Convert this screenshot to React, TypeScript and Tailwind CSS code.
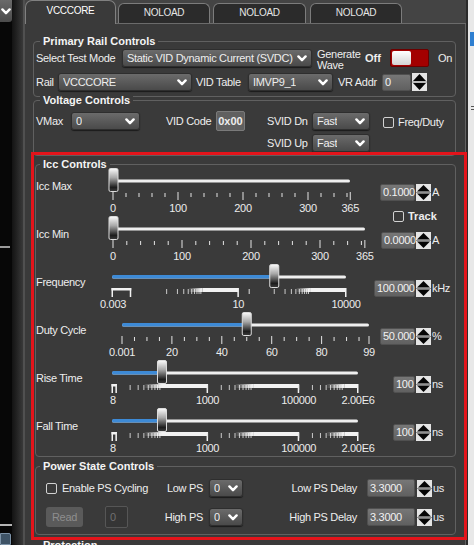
import type { ReactNode } from 'react'

const SANS = 'Liberation Sans, Arial, sans-serif'

// ── small widgets ─────────────────────────────────────────────────────────────
function Chevron() {
  return (
    <svg width="10" height="7" viewBox="0 0 10 7" className="shrink-0">
      <path d="M1.4 1.4 L5 5.2 L8.6 1.4" fill="none" stroke="#ffffff" strokeWidth="2.4" strokeLinecap="round" strokeLinejoin="round" />
    </svg>
  )
}

function Dropdown({ value, className = '' }: { value: string; className?: string }) {
  return (
    <div
      className={`flex h-[18px] shrink-0 items-center justify-between rounded-[3px] border border-[#2e2e2e] bg-linear-to-b from-[#6b6b6b] to-[#4a4a4a] pl-[4px] pr-[4px] shadow-[0_1px_1px_rgba(0,0,0,0.55)] ${className}`}
    >
      <span className="truncate leading-none">{value}</span>
      <Chevron />
    </div>
  )
}

function NumBox({ value, className = '' }: { value: string; className?: string }) {
  return (
    <div
      className={`flex h-[17px] shrink-0 items-center rounded-[2px] border border-[#505050] bg-linear-to-b from-[#777777] to-[#606060] pl-[2px] leading-none text-[#f2f2f2] ${className}`}
    >
      {value}
    </div>
  )
}

function Spin({ h = 17, className = '' }: { h?: number; className?: string }) {
  const m = h / 2
  return (
    <svg width="15" height={h} viewBox={`0 0 15 ${h}`} className={`shrink-0 ${className}`}>
      <rect x="0" y="0" width="15" height={h} fill="#e4e4e4" />
      <path d={`M7.5 1 L14 ${m - 1} L1 ${m - 1} Z`} fill="#050505" />
      <path d={`M7.5 ${h - 1} L14 ${m + 1} L1 ${m + 1} Z`} fill="#050505" />
      <rect x="0" y={m - 0.5} width="15" height="1" fill="#8f8f8f" />
    </svg>
  )
}

function Checkbox({ className = '' }: { className?: string }) {
  return <div className={`h-[11px] w-[11px] shrink-0 rounded-[2px] border border-[#d2d2d2] ${className}`} />
}

function Toggle({ className = '' }: { className?: string }) {
  return (
    <div className={`flex h-[18px] w-[39px] shrink-0 rounded-[2px] border border-[#6a0000] bg-[#a30000] p-[1px] ${className}`}>
      <div className="h-full w-[19px] rounded-[2px] bg-linear-to-b from-[#ffffff] to-[#d4d4d4]" />
    </div>
  )
}

function Group({
  title,
  tx = 'ml-[6px]',
  className = '',
  children,
}: {
  title: string
  tx?: string
  className?: string
  children?: ReactNode
}) {
  return (
    <div className={`shrink-0 rounded-[4px] border border-[#606060] ${className}`}>
      <div className={`-mt-[7px] w-fit bg-[#3a3a3a] px-[3px] font-bold leading-[13px] tracking-normal text-[#f4f4f4] ${tx}`}>
        {title}
      </div>
      {children}
    </div>
  )
}

// ── slider drawing ────────────────────────────────────────────────────────────
const TICK = '#e4e4e4'

function Tk({ x, major }: { x: number; major?: boolean }) {
  return <rect x={x - 0.5} y={major ? 24 : 25} width={1} height={major ? 8 : 4} fill={TICK} />
}

function Lbl({ x, children }: { x: number; children: ReactNode }) {
  return (
    <text x={x} y={44} textAnchor="middle" fontFamily={SANS} fontSize={11} letterSpacing={-0.3} fill="#ececec">
      {children}
    </text>
  )
}

function Bar({ a, b }: { a: number; b: number }) {
  return (
    <g fill="#f2f2f2">
      <rect x={a} y={24} width={b - a} height={4} />
      <rect x={b - 1} y={24} width={1.5} height={9} />
    </g>
  )
}

function Bracket({ a, b }: { a: number; b: number }) {
  return (
    <g fill="#f2f2f2">
      <rect x={a - 0.5} y={24} width={b - a + 1} height={2.5} />
      <rect x={a - 0.5} y={24} width={1.5} height={9} />
      <rect x={b - 1} y={24} width={1.5} height={9} />
    </g>
  )
}

function Decade({ p, d, gid }: { p: (v: number) => number; d: number; gid: string }) {
  return (
    <g>
      {[1, 2, 3, 4, 5, 6, 7, 8, 9].map(m => (
        <rect key={m} x={p(m * d) - 0.5} y={25} width={1} height={5} fill={TICK} opacity={0.85} />
      ))}
      <rect x={p(4 * d)} y={24} width={p(10 * d) - p(4 * d)} height={4} fill={`url(#${gid})`} />
    </g>
  )
}

function SliderArt({
  id,
  x0,
  x1,
  thumb,
  fill,
  children,
}: {
  id: string
  x0: number
  x1: number
  thumb: number
  fill?: boolean
  children?: ReactNode
}) {
  return (
    <>
      <defs>
        <linearGradient id={`t${id}`} x1="0" y1="0" x2="0" y2="1">
          <stop offset="0" stopColor="#fbfbfb" />
          <stop offset="0.4" stopColor="#a8a8a8" />
          <stop offset="0.82" stopColor="#1c1c1c" />
          <stop offset="1" stopColor="#3c3c3c" />
        </linearGradient>
        <linearGradient id={`g${id}`} x1="0" y1="0" x2="1" y2="0">
          <stop offset="0" stopColor="#ffffff" stopOpacity="0" />
          <stop offset="1" stopColor="#ffffff" stopOpacity="0.95" />
        </linearGradient>
      </defs>
      <rect x={x0} y={11.5} width={x1 - x0} height={3} rx={1.5} fill="#efefef" />
      {fill && <rect x={x0} y={11} width={thumb - x0} height={3.5} rx={1.5} fill="#3d8ad6" />}
      {children}
      <rect x={thumb - 4.5} y={0.5} width={9} height={23} rx={1.5} fill={`url(#t${id})`} stroke="#dcdcdc" />
    </>
  )
}

function SliderRow({
  label,
  value,
  inputW,
  unit,
  extra,
  children,
}: {
  label: string
  value: string
  inputW: string
  unit: string
  extra?: ReactNode
  children: ReactNode
}) {
  return (
    <div className="flex h-[48px] shrink-0">
      <div className="w-[64px] shrink-0 pt-[12px] leading-[13px]">{label}</div>
      <svg width={276} height={48} className="shrink-0 overflow-visible">
        {children}
      </svg>
      <div className="flex w-[78px] shrink-0 flex-col">
        <div className="mt-[16px] flex items-center">
          <div className="flex w-[39px] justify-end">
            <NumBox value={value} className={inputW} />
          </div>
          <Spin className="ml-[1px]" />
          <span className="ml-[1px] leading-none">{unit}</span>
        </div>
        {extra}
      </div>
    </div>
  )
}

// scales
const lin = (x0: number, k: number) => (v: number) => x0 + v * k
const logp = (lo: number, hi: number, x0: number, w: number) => (v: number) =>
  x0 + ((Math.log10(v) - Math.log10(lo)) / (Math.log10(hi) - Math.log10(lo))) * w

function LinearTicks({ p, step, major, max, end }: { p: (v: number) => number; step: number; major: number; max: number; end: number }) {
  const out: ReactNode[] = []
  for (let v = 0; v <= max; v += step) out.push(<Tk key={v} x={p(v)} major={v % major === 0} />)
  out.push(<Tk key="end" x={p(end)} major />)
  return <>{out}</>
}

const pMax = lin(13, 0.65)
const pMin = lin(13, 0.69)
const pDuty = lin(22, 2.495)
const pFreq = logp(0.003, 10000, 12, 234)
const pRise = logp(8, 2e6, 12, 246)

function RiseScale({ id }: { id: string }) {
  const g = `g${id}`
  return (
    <>
      <Bracket a={pRise(8)} b={pRise(10)} />
      <Decade p={pRise} d={10} gid={g} />
      <Bar a={pRise(100)} b={pRise(1000)} />
      <Decade p={pRise} d={1000} gid={g} />
      <Bar a={pRise(1e4)} b={pRise(1e5)} />
      <Decade p={pRise} d={1e5} gid={g} />
      <Bar a={pRise(1e6)} b={pRise(2e6)} />
      <Lbl x={pRise(8) + 1}>8</Lbl>
      <Lbl x={pRise(1000)}>1000</Lbl>
      <Lbl x={pRise(1e5)}>100000</Lbl>
      <Lbl x={pRise(2e6)}>2.00E6</Lbl>
    </>
  )
}

// ── frame pieces ──────────────────────────────────────────────────────────────
function LeftStrip() {
  return (
    <div className="flex h-full w-[25px] shrink-0">
      <div className="flex w-[12px] shrink-0 flex-col bg-[#070707]">
        <div className="flex h-[23px] items-center rounded-br-[3px] bg-linear-to-b from-[#6a6a6a] to-[#4b4b4b] pl-[1px]">
          <Chevron />
        </div>
        <div className="mt-[224px] h-[2px] w-[10px] bg-[#9a9a9a]" />
        <div className="mt-[276px] h-[2px] w-[12px] bg-[#b4b4b4]" />
        <div className="mt-[7px] h-[12px] w-[11px] rounded-tr-[2px] border border-[#7d93a8] bg-[#3e5366]" />
      </div>
      <div className="w-[11px] shrink-0 bg-linear-to-r from-[#131313] to-[#393939]" />
      <div className="w-[2px] shrink-0 bg-[#505050]" />
    </div>
  )
}

function RightStrip() {
  return (
    <div className="flex h-full w-[8px] shrink-0">
      <div className="w-[2px] bg-[#2b2b2b]" />
      <div className="flex w-[6px] flex-col bg-[#e8e8e8]">
        <div className="ml-[2px] mt-[32px] h-[14px] w-[4px] bg-[#2f7fd0]" />
        <div className="ml-[3px] mt-[60px] h-[1px] w-[3px] bg-[#555]" />
        <div className="ml-[3px] mt-[2px] h-[1px] w-[3px] bg-[#555]" />
      </div>
    </div>
  )
}

function Tab({ label, className = '' }: { label: string; className?: string }) {
  return (
    <div
      className={`flex h-[20px] shrink-0 items-center justify-center rounded-t-[6px] border-x border-t border-[#7c7c7c] bg-[#2b2b2b] pb-[2px] text-[10px] text-[#e6e6e6] ${className}`}
    >
      {label}
    </div>
  )
}

export default function App() {
  return (
    <div className="relative flex h-[545px] w-[474px] overflow-hidden bg-[#3a3a3a] font-['Liberation_Sans',Arial,sans-serif] text-[11px] tracking-[-0.3px] text-[#eeeeee]">
      <LeftStrip />

      <div className="flex w-[441px] shrink-0 flex-col">
        {/* tabs */}
        <div className="flex h-[24px] shrink-0 items-end border-b border-[#6b6b6b] bg-[#444444]">
          <div className="-mb-px flex h-[24px] w-[91px] shrink-0 justify-center rounded-t-[7px] border-x border-t border-[#808080] bg-[#3a3a3a] pt-[3px] text-[10px] leading-[13px] text-white">
            VCCCORE
          </div>
          <Tab label="NOLOAD" className="ml-[2px] w-[92px]" />
          <Tab label="NOLOAD" className="ml-[3px] w-[93px]" />
          <Tab label="NOLOAD" className="ml-[4px] w-[92px]" />
        </div>

        {/* tab content */}
        <div className="flex min-h-0 flex-1 flex-col overflow-hidden border-r border-[#626262] bg-[#3a3a3a]">
          {/* ── Primary Rail Controls ─────────────────────────────── */}
          <Group title="Primary Rail Controls" className="ml-[8px] mt-[17px] w-[423px] pb-[5px]">
            <div className="mt-[1px] flex h-[18px] items-center pl-[2px]">
              <span className="w-[86px] shrink-0">Select Test Mode</span>
              <Dropdown value="Static VID Dynamic Current (SVDC)" className="w-[190px]" />
              <div className="ml-[5px] mt-[3px] flex w-[48px] shrink-0 flex-col leading-[11px]">
                <span>Generate</span>
                <span>Wave</span>
              </div>
              <span className="font-bold tracking-normal">Off</span>
              <Toggle className="ml-[9px]" />
              <span className="ml-[9px]">On</span>
            </div>
            <div className="mt-[6px] flex h-[18px] items-center pl-[2px]">
              <span className="w-[22px] shrink-0">Rail</span>
              <Dropdown value="VCCCORE" className="w-[134px]" />
              <span className="ml-[4px] w-[52px] shrink-0">VID Table</span>
              <Dropdown value="IMVP9_1" className="w-[85px]" />
              <span className="ml-[5px] w-[44px] shrink-0">VR Addr</span>
              <NumBox value="0" className="h-[16px] w-[29px] self-end" />
              <Spin h={18} className="ml-[1px]" />
            </div>
          </Group>

          {/* ── Voltage Controls ──────────────────────────────────── */}
          <Group title="Voltage Controls" className="ml-[8px] mt-[3px] w-[423px] pb-[3px]">
            <div className="mt-[5px] flex h-[18px] items-center pl-[2px]">
              <span className="w-[35px] shrink-0">VMax</span>
              <Dropdown value="0" className="w-[69px]" />
              <span className="ml-[26px] w-[50px] shrink-0">VID Code</span>
              <div className="flex h-[20px] w-[29px] shrink-0 items-center justify-center rounded-[2px] border border-[#7a7a7a] bg-[#606060] font-bold tracking-normal">
                0x00
              </div>
              <span className="ml-[22px] w-[45px] shrink-0">SVID Dn</span>
              <Dropdown value="Fast" className="w-[58px]" />
              <Checkbox className="ml-[13px] mt-[3px]" />
              <span className="ml-[4px] mt-[3px]">Freq/Duty</span>
            </div>
            <div className="mt-[4px] flex h-[18px] items-center pl-[233px]">
              <span className="w-[45px] shrink-0">SVID Up</span>
              <Dropdown value="Fast" className="w-[58px]" />
            </div>
          </Group>

          {/* ── Icc Controls ──────────────────────────────────────── */}
          <Group title="Icc Controls" tx="ml-[4px]" className="ml-[10px] mt-[8px] w-[421px]">
            <div className="-mt-[3px] flex flex-col">
              <SliderRow
                label="Icc Max"
                value="0.1000"
                inputW="w-[35px]"
                unit="A"
                extra={
                  <div className="ml-[17px] mt-[10px] flex items-center">
                    <Checkbox />
                    <span className="ml-[4px] font-bold leading-none tracking-normal">Track</span>
                  </div>
                }
              >
                <SliderArt id="max" x0={12} x1={250} thumb={13.5}>
                  <LinearTicks p={pMax} step={20} major={100} max={360} end={365} />
                  <Lbl x={pMax(0)}>0</Lbl>
                  <Lbl x={pMax(100)}>100</Lbl>
                  <Lbl x={pMax(200)}>200</Lbl>
                  <Lbl x={pMax(300)}>300</Lbl>
                  <Lbl x={pMax(365)}>365</Lbl>
                </SliderArt>
              </SliderRow>

              <SliderRow label="Icc Min" value="0.0000" inputW="w-[34px]" unit="A">
                <SliderArt id="min" x0={12} x1={265} thumb={13.5}>
                  <LinearTicks p={pMin} step={20} major={100} max={360} end={365} />
                  <Lbl x={pMin(0)}>0</Lbl>
                  <Lbl x={pMin(100)}>100</Lbl>
                  <Lbl x={pMin(200)}>200</Lbl>
                  <Lbl x={pMin(300)}>300</Lbl>
                  <Lbl x={pMin(365)}>365</Lbl>
                </SliderArt>
              </SliderRow>

              <SliderRow label="Frequency" value="100.000" inputW="w-[41px]" unit="kHz">
                <SliderArt id="frq" x0={12} x1={246} thumb={pFreq(100)} fill>
                  <Bracket a={pFreq(0.003)} b={pFreq(0.01)} />
                  <Decade p={pFreq} d={0.1} gid="gfrq" />
                  <Bar a={pFreq(1)} b={pFreq(10)} />
                  <rect x={pFreq(20) - 0.5} y={25} width={1} height={5} fill={TICK} />
                  <Decade p={pFreq} d={100} gid="gfrq" />
                  <Bar a={pFreq(1000)} b={pFreq(10000)} />
                  <Lbl x={pFreq(0.003) + 1}>0.003</Lbl>
                  <Lbl x={pFreq(10)}>10</Lbl>
                  <Lbl x={pFreq(10000)}>10000</Lbl>
                </SliderArt>
              </SliderRow>

              <SliderRow label="Duty Cycle" value="50.000" inputW="w-[35px]" unit="%">
                <SliderArt id="dty" x0={22} x1={269} thumb={pDuty(50)} fill>
                  <LinearTicks p={pDuty} step={5} major={20} max={95} end={99} />
                  <Lbl x={pDuty(0)}>0.001</Lbl>
                  <Lbl x={pDuty(20)}>20</Lbl>
                  <Lbl x={pDuty(40)}>40</Lbl>
                  <Lbl x={pDuty(60)}>60</Lbl>
                  <Lbl x={pDuty(80)}>80</Lbl>
                  <Lbl x={pDuty(99)}>99</Lbl>
                </SliderArt>
              </SliderRow>

              <SliderRow label="Rise Time" value="100" inputW="w-[22px]" unit="ns">
                <SliderArt id="rse" x0={12} x1={258} thumb={pRise(100)} fill>
                  <RiseScale id="rse" />
                </SliderArt>
              </SliderRow>

              <SliderRow label="Fall Time" value="100" inputW="w-[22px]" unit="ns">
                <SliderArt id="fll" x0={12} x1={258} thumb={pRise(100)} fill>
                  <RiseScale id="fll" />
                </SliderArt>
              </SliderRow>
            </div>
          </Group>

          {/* ── Power State Controls ──────────────────────────────── */}
          <Group title="Power State Controls" tx="ml-[4px]" className="ml-[10px] mt-[9px] w-[421px] pb-[6px]">
            <div className="mt-[6px] flex h-[18px] items-center">
              <div className="flex w-[124px] shrink-0 items-center pl-[10px]">
                <Checkbox />
                <span className="ml-[5px]">Enable PS Cycling</span>
              </div>
              <span className="w-[43px] shrink-0 text-right">Low PS</span>
              <Dropdown value="0" className="ml-[6px] w-[34px]" />
              <span className="w-[114px] shrink-0 text-right">Low PS Delay</span>
              <NumBox value="3.3000" className="ml-[10px] h-[18px] w-[48px]" />
              <Spin className="ml-[2px]" />
              <span className="ml-[1px]">us</span>
            </div>
            <div className="mt-[9px] flex h-[22px] items-center">
              <div className="flex w-[124px] shrink-0 items-center pl-[10px]">
                <div className="flex h-[20px] w-[37px] items-center justify-center rounded-[3px] bg-[#5a5a5a] text-[#8e8e8e]">
                  Read
                </div>
                <div className="ml-[22px] flex h-[22px] w-[23px] items-center rounded-[2px] border border-[#565656] bg-[#353535] pl-[4px] text-[#707070]">
                  0
                </div>
              </div>
              <span className="w-[43px] shrink-0 text-right">High PS</span>
              <Dropdown value="0" className="ml-[6px] w-[34px]" />
              <span className="w-[114px] shrink-0 text-right">High PS Delay</span>
              <NumBox value="3.3000" className="ml-[10px] h-[18px] w-[48px]" />
              <Spin className="ml-[2px]" />
              <span className="ml-[1px]">us</span>
            </div>
          </Group>

          <Group title="Protection" tx="ml-[4px]" className="ml-[10px] mt-[10px] h-[40px] w-[421px]" />
        </div>
      </div>

      <RightStrip />

      {/* red annotation frame drawn over the screenshot */}
      <div className="pointer-events-none absolute left-[31px] top-[152px] h-[388px] w-[436px] border-[3px] border-[#e3141b]" />
    </div>
  )
}
